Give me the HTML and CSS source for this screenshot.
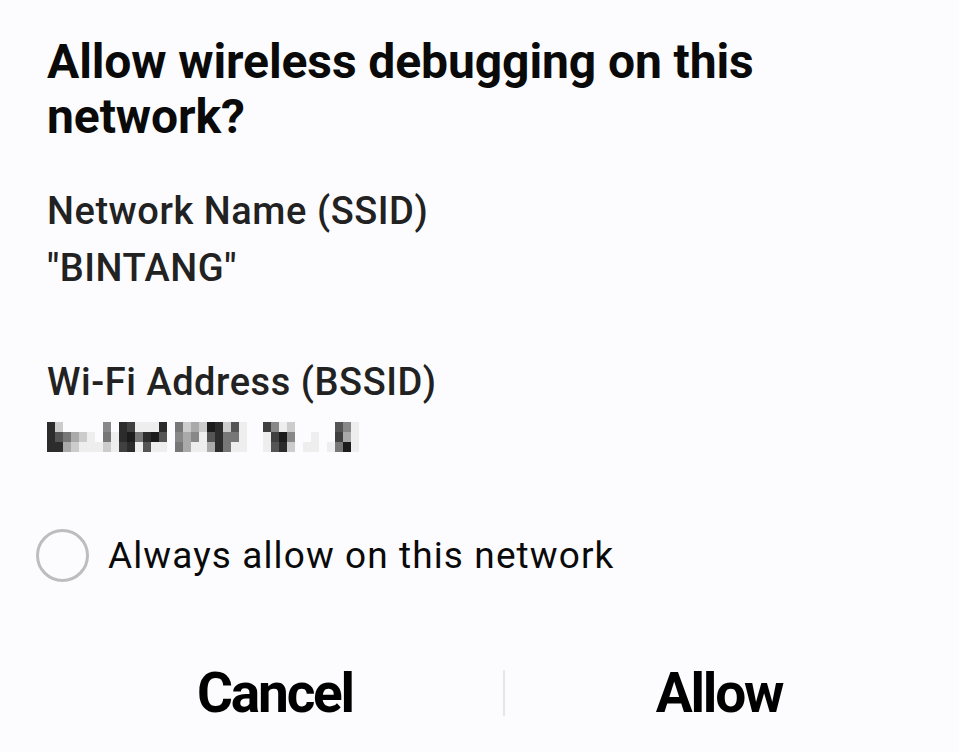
FILE: index.html
```html
<!DOCTYPE html>
<html>
<head>
<meta charset="utf-8">
<link rel="stylesheet" href="styles.css">
</head>
<body>
<div class="dialog">
  <h1 class="title">Allow wireless debugging on this network?</h1>
  <div class="field">
    <div class="label">Network Name (SSID)</div>
    <div class="value">"BINTANG"</div>
  </div>
  <div class="field field-2">
    <div class="label">Wi-Fi Address (BSSID)</div>
    <div class="pixels">
      <i class="s2"></i><i class="s2"></i><i class="s2"></i>
      <i class="s8"></i><i class="s4"></i><i class="s2"></i>
      <i class="s0"></i><i class="s5"></i><i class="s7"></i>
      <i class="s0"></i><i class="s7"></i><i class="s8"></i>
      <i class="s0"></i><i class="s8"></i><i class="s9"></i>
      <i class="s0"></i><i class="s9"></i><i class="s9"></i>
      <i class="s0"></i><i class="s0"></i><i class="s9"></i>
      <i class="s6"></i><i class="s5"></i><i class="s8"></i>
      <i class="s0"></i><i class="s9"></i><i class="s9"></i>
      <i class="s2"></i><i class="s2"></i><i class="s3"></i>
      <i class="s3"></i><i class="s1"></i><i class="s2"></i>
      <i class="s9"></i><i class="s5"></i><i class="s9"></i>
      <i class="s9"></i><i class="s2"></i><i class="s4"></i>
      <i class="s9"></i><i class="s1"></i><i class="s9"></i>
      <i class="s2"></i><i class="s4"></i><i class="s9"></i>
      <i class="s0"></i><i class="s0"></i><i class="s0"></i>
      <i class="s5"></i><i class="s6"></i><i class="s5"></i>
      <i class="s8"></i><i class="s7"></i><i class="s7"></i>
      <i class="s7"></i><i class="s6"></i><i class="s9"></i>
      <i class="s8"></i><i class="s9"></i><i class="s9"></i>
      <i class="s1"></i><i class="s4"></i><i class="s7"></i>
      <i class="s2"></i><i class="s2"></i><i class="s2"></i>
      <i class="s8"></i><i class="s5"></i><i class="s5"></i>
      <i class="s4"></i><i class="s5"></i><i class="s9"></i>
      <i class="s9"></i><i class="s9"></i><i class="s9"></i>
      <i class="s0"></i><i class="s0"></i><i class="s0"></i>
      <i class="s0"></i><i class="s0"></i><i class="s0"></i>
      <i class="s3"></i><i class="s9"></i><i class="s9"></i>
      <i class="s6"></i><i class="s3"></i><i class="s4"></i>
      <i class="s9"></i><i class="s1"></i><i class="s2"></i>
      <i class="s8"></i><i class="s6"></i><i class="s8"></i>
      <i class="s0"></i><i class="s0"></i><i class="s0"></i>
      <i class="s0"></i><i class="s0"></i><i class="s9"></i>
      <i class="s0"></i><i class="s9"></i><i class="s9"></i>
      <i class="s0"></i><i class="s0"></i><i class="s0"></i>
      <i class="s0"></i><i class="s0"></i><i class="s9"></i>
      <i class="s4"></i><i class="s3"></i><i class="s5"></i>
      <i class="s6"></i><i class="s7"></i><i class="s1"></i>
      <i class="s9"></i><i class="s9"></i><i class="s9"></i>
    </div>
  </div>
  <label class="check">
    <span class="radio"></span>
    <span class="check-text">Always allow on this network</span>
  </label>
  <div class="actions">
    <button class="btn btn-cancel">Cancel</button>
    <span class="divider"></span>
    <button class="btn btn-allow">Allow</button>
  </div>
</div>
</body>
</html>
```

FILE: styles.css
```css
* { box-sizing: border-box; }
html, body {
  margin: 0;
  padding: 0;
  background: #fcfcfe;
}
body {
  font-family: Roboto, "Noto Sans", sans-serif;
  color: #111;
  width: 959px;
  height: 752px;
  overflow: hidden;
}
.dialog {
  padding: 34px 0 0 0;
}
.title {
  margin: 0;
  padding: 0 120px 0 47px;
  font-size: 48px;
  line-height: 55px;
  font-weight: 700;
  color: #0a0a0a;
  letter-spacing: -0.1px;
}
.field {
  padding-left: 47px;
  margin-top: 39px;
}
.field-2 {
  margin-top: 57px;
}
.label, .value {
  font-size: 38px;
  line-height: 57px;
  font-weight: 500;
  color: #222;
  letter-spacing: 0.55px;
}
.pixels {
  display: grid;
  grid-template-rows: repeat(3, 10px);
  grid-auto-flow: column;
  grid-auto-columns: 8px;
  margin-top: 11px;
  filter: blur(0.7px);
}
.pixels i { display: block; }
.s0 { background: transparent; }
.s1 { background: #1c1c1c; }
.s2 { background: #2c2c2c; }
.s3 { background: #404040; }
.s4 { background: #555; }
.s5 { background: #777; }
.s6 { background: #888; }
.s7 { background: #aaa; }
.s8 { background: #ccc; }
.s9 { background: #eee; }
.check {
  display: flex;
  align-items: center;
  padding-left: 36px;
  margin-top: 77px;
}
.radio {
  width: 53px;
  height: 53px;
  border: 3px solid #bdbdbd;
  border-radius: 50%;
  flex: none;
}
.check-text {
  margin-left: 19px;
  font-size: 37px;
  letter-spacing: 1.1px;
  color: #0a0a0a;
}
.actions {
  display: flex;
  align-items: center;
  margin: 86px 0 0 47px;
  height: 50px;
}
.btn {
  border: 0;
  background: none;
  padding: 0;
  font-family: Roboto, "Noto Sans", sans-serif;
  font-weight: 700;
  font-size: 55px;
  color: #000;
  letter-spacing: -2.2px;
  flex: none;
}
.btn-cancel { width: 456px; }
.btn-allow { width: 428px; }
.divider {
  width: 2px;
  height: 46px;
  background: #e6e6e8;
  flex: none;
}
```
